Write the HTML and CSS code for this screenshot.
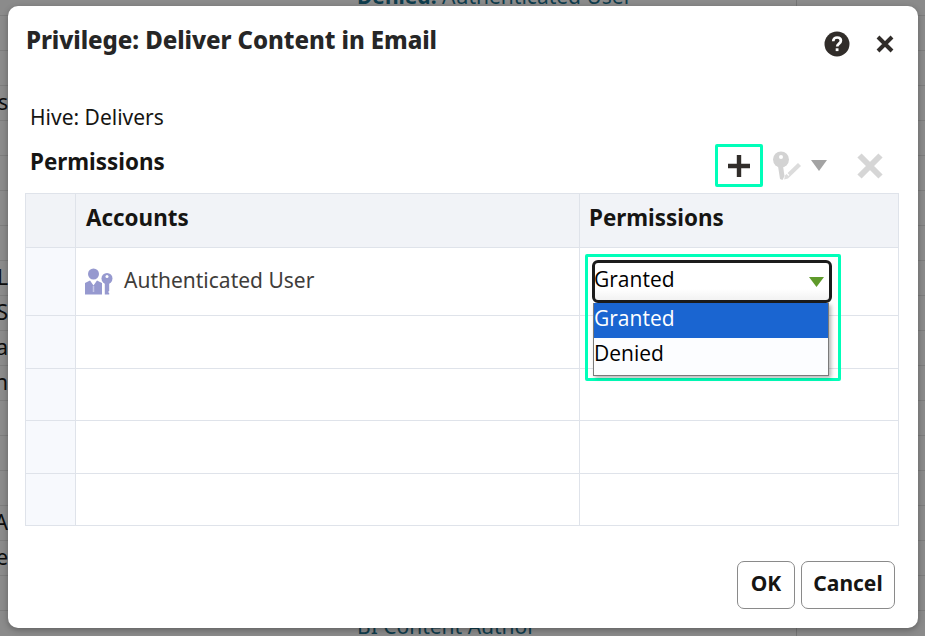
FILE: index.html
```html
<!DOCTYPE html>
<html lang="en">
<head>
<meta charset="utf-8">
<title>Privilege: Deliver Content in Email</title>
<link rel="stylesheet" href="styles.css">
</head>
<body>
<div class="page">
  <div class="bg-row"><span class="bg-left"></span><span class="bg-main"><b>Denied:</b> Authenticated User</span></div>
  <div class="bg-row"><span class="bg-left"></span><span class="bg-main"></span></div>
  <div class="bg-row"><span class="bg-left"></span><span class="bg-main"></span></div>
  <div class="bg-row"><span class="bg-left">s</span><span class="bg-main"></span></div>
  <div class="bg-row"><span class="bg-left"></span><span class="bg-main"></span></div>
  <div class="bg-row"><span class="bg-left"></span><span class="bg-main"></span></div>
  <div class="bg-row"><span class="bg-left"></span><span class="bg-main"></span></div>
  <div class="bg-row"><span class="bg-left"></span><span class="bg-main"></span></div>
  <div class="bg-row"><span class="bg-left">L</span><span class="bg-main"></span></div>
  <div class="bg-row"><span class="bg-left">S</span><span class="bg-main"></span></div>
  <div class="bg-row"><span class="bg-left">a</span><span class="bg-main"></span></div>
  <div class="bg-row"><span class="bg-left">n</span><span class="bg-main"></span></div>
  <div class="bg-row"><span class="bg-left"></span><span class="bg-main"></span></div>
  <div class="bg-row"><span class="bg-left"></span><span class="bg-main"></span></div>
  <div class="bg-row"><span class="bg-left"></span><span class="bg-main"></span></div>
  <div class="bg-row"><span class="bg-left">A</span><span class="bg-main"></span></div>
  <div class="bg-row"><span class="bg-left">e</span><span class="bg-main"></span></div>
  <div class="bg-row"><span class="bg-left"></span><span class="bg-main"></span></div>
  <div class="bg-row"><span class="bg-left"></span><span class="bg-main">BI Content Author</span></div>
</div>

<div class="dialog">
  <div class="title-bar">
    <h1 class="title">Privilege: Deliver Content in Email</h1>
    <div class="title-icons">
      <svg class="help" width="26" height="26" viewBox="0 0 26 26" aria-label="Help"><circle cx="13" cy="13" r="12.500" fill="#312d2a"/><path d="M9.200 10.200c0-2.400 1.700-3.700 3.900-3.700 2.300 0 3.800 1.300 3.800 3.200 0 2.900-3.700 2.800-3.700 5.700" fill="none" stroke="#fff" stroke-width="2.700"/><rect x="11.700" y="17.300" width="2.800" height="2.800" fill="#fff"/></svg>
      <svg class="close" width="18" height="18" viewBox="0 0 18 18" aria-label="Close"><path d="M2 2 16 16M16 2 2 16" stroke="#312d2a" stroke-width="4"/></svg>
    </div>
  </div>
  <div class="hive">Hive: Delivers</div>
  <div class="perm-head">
    <h2 class="perm-title">Permissions</h2>
    <div class="toolbar">
      <span class="highlight add-btn">
        <svg width="24" height="24" viewBox="0 0 24 24" aria-label="Add"><path d="M12 1v22M1 12h22" stroke="#312d2a" stroke-width="4.400"/></svg>
      </span>
      <svg class="edit-icon" width="30" height="30" viewBox="0 0 30 30" aria-label="Edit">
        <circle cx="9" cy="8.500" r="8" fill="#d3d3d3"/><circle cx="9" cy="6" r="2" fill="#fff"/><path d="M6 15l5 0 1.500 10-2 4-2.500-1z" fill="#d3d3d3"/><path d="M13 24.500l-.8 4 3.800-1 13-12.500-3-3z" fill="#dcdcdc"/><path d="M14 21.500l3 3" stroke="#fff" stroke-width="1.200"/>
      </svg>
      <svg class="caret" width="16" height="11" viewBox="0 0 16 11"><path d="M0 0h16L8 11z" fill="#a3a3a3"/></svg>
      <svg class="del-icon" width="26" height="26" viewBox="0 0 26 26" aria-label="Delete"><path d="M2.500 2.500 23.500 23.500M23.500 2.500 2.500 23.500" stroke="#d6d6d6" stroke-width="6"/></svg>
    </div>
  </div>

  <table class="grid">
    <colgroup><col class="c-rh"><col class="c-acc"><col class="c-perm"></colgroup>
    <thead>
      <tr class="r-head"><th class="rh"></th><th>Accounts</th><th class="th-perm">Permissions</th></tr>
    </thead>
    <tbody>
      <tr class="r-first">
        <td class="rh"></td>
        <td>
          <div class="acct">
            <svg width="28" height="27" viewBox="0 0 28 27" aria-hidden="true">
              <circle cx="8.500" cy="6" r="5.500" fill="#9699cf"/>
              <path d="M0 26.500V15l5-2.500 3.500 5 3.500-5 5 2.500v11.500z" fill="#9699cf"/>
              <path d="M8.500 18v6" stroke="#c4c6e6" stroke-width="1.500"/>
              <circle cx="22" cy="10.500" r="5.500" fill="#9699cf"/><circle cx="22" cy="8.500" r="1.500" fill="#fff"/>
              <path d="M19.800 14h4.400v9l-1.200 1 1.200 1v1.500h-4.400z" fill="#9699cf"/>
            </svg>
            <span>Authenticated User</span>
          </div>
        </td>
        <td class="perm-cell">
          <div class="highlight sel-wrap">
            <div class="select"><span>Granted</span><svg width="15" height="10" viewBox="0 0 15 10"><path d="M0 0h15L7.500 10z" fill="#5f9a2b"/></svg></div>
            <ul class="menu">
              <li class="on">Granted</li>
              <li>Denied</li>
            </ul>
          </div>
        </td>
      </tr>
      <tr class="r1"><td class="rh"></td><td></td><td></td></tr>
      <tr class="r2"><td class="rh"></td><td></td><td></td></tr>
      <tr class="r1"><td class="rh"></td><td></td><td></td></tr>
      <tr class="r2"><td class="rh"></td><td></td><td></td></tr>
    </tbody>
  </table>

  <div class="actions">
    <button class="btn ok">OK</button>
    <button class="btn">Cancel</button>
  </div>
</div>
</body>
</html>
```
FILE: styles.css
```css
* { box-sizing: border-box; }
html, body { margin: 0; padding: 0; height: 100%; }
body {
  width: 925px;
  height: 636px;
  overflow: hidden;
  position: relative;
  background: #8b8b8b;
  font-family: "Noto Sans", "Open Sans", sans-serif;
}
.page { display: flex; flex-direction: column; margin-top: -19px; }
.bg-row {
  height: 35px;
  flex: none;
  display: flex;
  border-bottom: 1px solid #7d7d7d;
  font-size: 21px;
  line-height: 33px;
  color: #0c0c0c;
}
.bg-left { width: 8px; display: flex; justify-content: flex-end; overflow: hidden; flex: none; }
.bg-main {
  width: 789px;
  flex: none;
  border-right: 1px solid #757575;
  padding-left: 349px;
  color: #0f3d4d;
  white-space: nowrap;
  line-height: 30px;
}

.dialog {
  position: absolute;
  left: 8px;
  top: 6px;
  width: 910px;
  height: 622px;
  background: #fff;
  border-radius: 10px;
  box-shadow: 0 2px 6px rgba(0,0,0,.3);
  display: flex;
  flex-direction: column;
  padding: 0 19px 0 17px;
  color: #161513;
}
.title-bar { display: flex; justify-content: space-between; align-items: flex-start; height: 96px; padding-top: 17px; flex: none; }
.title { margin: 0 0 0 1px; font-size: 24px; line-height: 34px; font-weight: 800; color: #262626; letter-spacing: -.07px; }
.title-icons { display: flex; align-items: center; gap: 26px; padding: 8px 5px 0 0; }
.help, .close { display: block; }
.hive { font-size: 21px; line-height: 30px; margin-left: 5px; color: #161513; flex: none; }
.perm-head { display: flex; justify-content: space-between; align-items: flex-start; height: 49px; margin-top: 12px; margin-left: 5px; flex: none; }
.perm-title { margin: 3px 0 0; font-size: 22.400px; line-height: 30px; font-weight: 700; color: #161513; }
.toolbar { display: flex; align-items: center; margin-right: 16px; height: 43px; }
.highlight { border: 3px solid #00ffb9; border-radius: 2px; }
.add-btn { width: 48px; height: 43px; display: flex; align-items: center; justify-content: center; }
.add-btn svg { display: block; }
.edit-icon { margin-left: 9px; }
.caret { margin-left: 9px; }
.del-icon { margin-left: 30px; }

.grid {
  border-collapse: collapse;
  table-layout: fixed;
  width: 874px;
  font-size: 21px;
  flex: none;
}
.c-rh { width: 50px; }
.c-perm { width: 319px; }
.grid th, .grid td { border: 1px solid #dfe3ea; padding: 0; }
.grid th {
  background: #f1f3f7;
  text-align: left;
  padding: 0 0 6px 10px;
  font-size: 22.400px;
  font-weight: 700;
  color: #161513;
}
.grid th.th-perm { padding-left: 9px; }
.grid .rh { background: #f7f9fd; padding: 0; }
.grid th.rh { background: #f1f3f7; }
.r-head { height: 54px; }
.r-first { height: 68px; }
.r1 { height: 53px; }
.r2 { height: 52px; }
.acct { display: flex; align-items: center; gap: 11px; padding: 0 0 4px 9px; color: #3f3d3a; }
.acct svg { display: block; margin-top: 4px; }
.perm-cell { position: relative; }
.sel-wrap {
  position: absolute;
  left: 5px;
  top: 6px;
  width: 256px;
  height: 127px;
  padding: 3px 4px;
  z-index: 2;
  font-family: "Open Sans", "Noto Sans", sans-serif;
  color: #000;
  background: transparent;
}
.select {
  width: 240px;
  height: 43px;
  border: 3px solid #1c1c1c;
  border-radius: 6px;
  background: linear-gradient(#fff 70%, #f2f2f2);
  display: flex;
  align-items: center;
  justify-content: space-between;
  padding: 0 5px 5px 0;
  line-height: 30px;
}
.select span { margin-left: -1px; }
.select svg { margin-top: 5px; }
.menu {
  list-style: none;
  margin: 0 0 0 1px;
  padding: 0;
  width: 236px;
  height: 73px;
  background: #fcfdff;
  border: 1px solid #7a7a7a;
  border-top: 0;
  box-shadow: 2px 2px 4px rgba(0,0,0,.3);
}
.menu li { height: 35px; line-height: 31px; padding-left: 0; }
.menu li.on { background: #1a65d1; color: #fff; }

.actions { display: flex; justify-content: flex-end; gap: 6px; margin-top: 35px; padding-right: 4px; }
.btn {
  height: 48px;
  width: 94px;
  background: #fff;
  border: 1px solid #8a8a8a;
  border-radius: 7px;
  font-family: "Noto Sans", sans-serif;
  font-size: 21px;
  font-weight: 700;
  color: #161513;
  padding: 0 0 4px;
}
.btn.ok { width: 58px; }
```
